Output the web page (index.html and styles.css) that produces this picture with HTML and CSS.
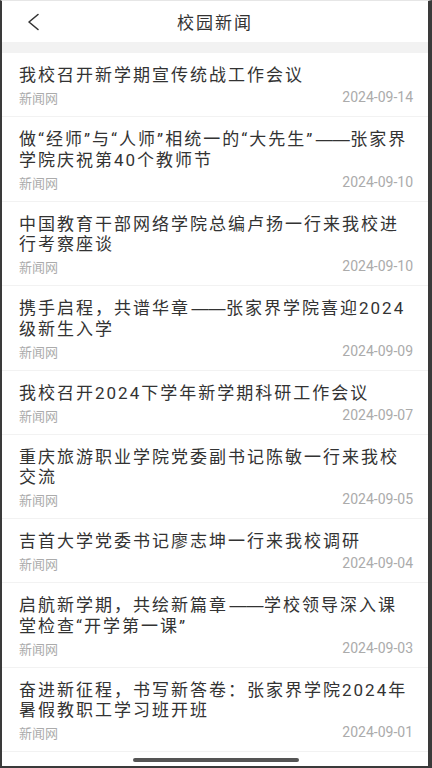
FILE: index.html
```html
<!DOCTYPE html>
<html>
<head>
    <title>校园新闻</title>
    <link rel="stylesheet" href="styles.css">
</head>
<body>
    <div class="phone">
        <div class="header">
            <span class="back">
                <svg width="16" height="20" viewBox="0 0 16 20">
                    <path d="M12 2.5 L3 10 L12 17.5" fill="none" stroke="#333" stroke-width="1.6" stroke-linecap="round" stroke-linejoin="round"/>
                </svg>
            </span>
            <h1>校园新闻</h1>
        </div>
        <div class="gap"></div>
        <ul class="news-list">
            <li class="news-item">
                <p class="news-title">我校召开新学期宣传统战工作会议</p>
                <div class="news-meta"><span class="source">新闻网</span><span class="date">2024-09-14</span></div>
            </li>
            <li class="news-item">
                <p class="news-title">做“经师”与“人师”相统一的“大先生”<span class="dash">——</span>张家界学院庆祝第40个教师节</p>
                <div class="news-meta"><span class="source">新闻网</span><span class="date">2024-09-10</span></div>
            </li>
            <li class="news-item">
                <p class="news-title">中国教育干部网络学院总编卢扬一行来我校进行考察座谈</p>
                <div class="news-meta"><span class="source">新闻网</span><span class="date">2024-09-10</span></div>
            </li>
            <li class="news-item">
                <p class="news-title">携手启程，共谱华章<span class="dash">——</span>张家界学院喜迎2024级新生入学</p>
                <div class="news-meta"><span class="source">新闻网</span><span class="date">2024-09-09</span></div>
            </li>
            <li class="news-item">
                <p class="news-title">我校召开2024下学年新学期科研工作会议</p>
                <div class="news-meta"><span class="source">新闻网</span><span class="date">2024-09-07</span></div>
            </li>
            <li class="news-item">
                <p class="news-title">重庆旅游职业学院党委副书记陈敏一行来我校交流</p>
                <div class="news-meta"><span class="source">新闻网</span><span class="date">2024-09-05</span></div>
            </li>
            <li class="news-item">
                <p class="news-title">吉首大学党委书记廖志坤一行来我校调研</p>
                <div class="news-meta"><span class="source">新闻网</span><span class="date">2024-09-04</span></div>
            </li>
            <li class="news-item">
                <p class="news-title">启航新学期，共绘新篇章<span class="dash">——</span>学校领导深入课堂检查“开学第一课”</p>
                <div class="news-meta"><span class="source">新闻网</span><span class="date">2024-09-03</span></div>
            </li>
            <li class="news-item">
                <p class="news-title">奋进新征程，书写新答卷：张家界学院2024年暑假教职工学习班开班</p>
                <div class="news-meta"><span class="source">新闻网</span><span class="date">2024-09-01</span></div>
            </li>
        </ul>
        <div class="home-bar"></div>
    </div>
</body>
</html>
```
FILE: styles.css
```css
* {
    box-sizing: border-box;
}
body {
    margin: 0;
    background-color: #3a3a3a;
    font-family: Roboto, "Noto Sans CJK SC", sans-serif;
}
.phone {
    position: relative;
    width: 432px;
    height: 768px;
    overflow: hidden;
    background-color: white;
    border-left: 2px solid #3a3a3a;
    border-right: 4px solid #3a3a3a;
    border-bottom: 2px solid #3a3a3a;
    border-top: 1px solid #e6e6e6;
}
.header {
    display: flex;
    align-items: center;
    justify-content: center;
    height: 41px;
    position: relative;
}
.header .back {
    position: absolute;
    left: 24px;
    top: 11px;
    display: flex;
}
.header h1 {
    margin: 0;
    font-size: 17px;
    font-weight: normal;
    letter-spacing: 2px;
    color: #333;
}
.gap {
    height: 11px;
    background-color: #f2f2f2;
}
.news-list {
    list-style: none;
    margin: 0;
    padding: 0;
}
.news-item {
    padding: 12px 15px 11px 17px;
    border-bottom: 1px solid #f2f2f2;
}
.news-title {
    margin: 0;
    font-size: 17px;
    line-height: 20px;
    letter-spacing: 2px;
    color: #333;
}
.news-title .dash {
    display: inline-block;
    width: 35px;
    margin-left: 1px;
    text-align: center;
    font-family: "Liberation Sans", sans-serif;
    letter-spacing: 0;
}
.news-meta {
    display: flex;
    justify-content: space-between;
    align-items: center;
    margin-top: 4px;
    height: 16px;
    color: #ababab;
}
.news-meta .source {
    font-size: 13px;
}
.news-meta .date {
    font-size: 14px;
}
.home-bar {
    position: absolute;
    left: 131px;
    bottom: 4px;
    width: 166px;
    height: 4px;
    border-radius: 2px;
    background-color: #555;
}
```
